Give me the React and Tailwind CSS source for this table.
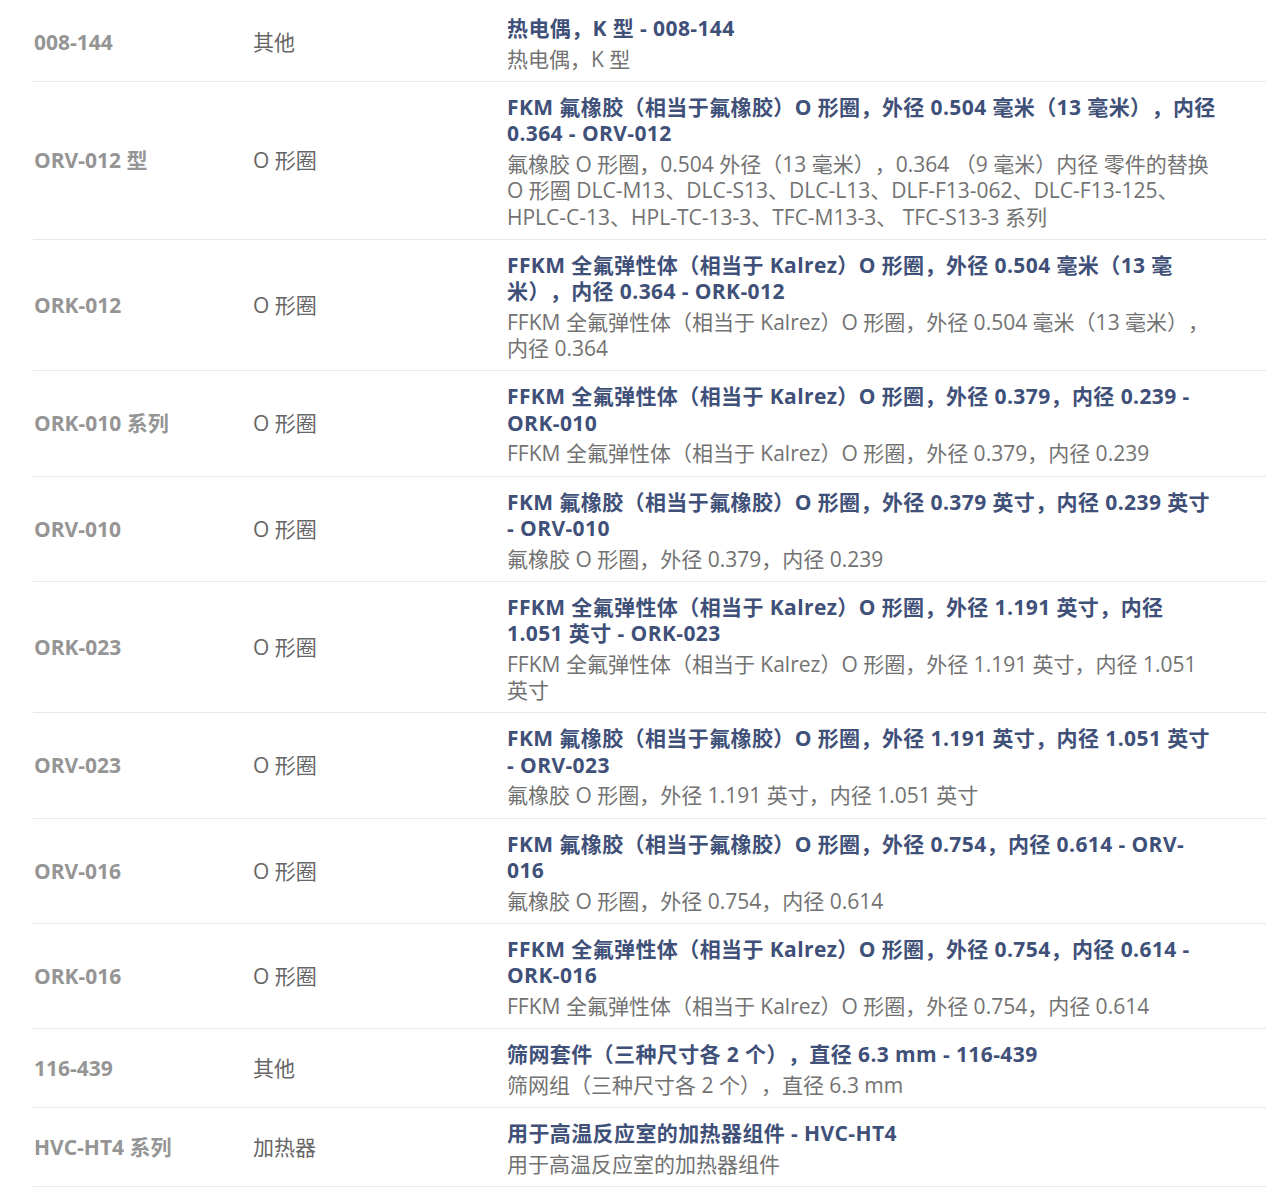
import React from "react";

const rows = [
  { code: "008-144", cat: "其他", title: "热电偶，K 型 - 008-144", desc: "热电偶，K 型" },
  {
    code: "ORV-012 型",
    cat: "O 形圈",
    title: "FKM 氟橡胶（相当于氟橡胶）O 形圈，外径 0.504 毫米（13 毫米），内径 0.364 - ORV-012",
    desc: "氟橡胶 O 形圈，0.504 外径（13 毫米），0.364 （9 毫米）内径 零件的替换 O 形圈 DLC-M13、DLC-S13、DLC-L13、DLF-F13-062、DLC-F13-125、HPLC-C-13、HPL-TC-13-3、TFC-M13-3、 TFC-S13-3 系列",
  },
  {
    code: "ORK-012",
    cat: "O 形圈",
    title: "FFKM 全氟弹性体（相当于 Kalrez）O 形圈，外径 0.504 毫米（13 毫米），内径 0.364 - ORK-012",
    desc: "FFKM 全氟弹性体（相当于 Kalrez）O 形圈，外径 0.504 毫米（13 毫米），内径 0.364",
  },
  {
    code: "ORK-010 系列",
    cat: "O 形圈",
    title: "FFKM 全氟弹性体（相当于 Kalrez）O 形圈，外径 0.379，内径 0.239 - ORK-010",
    desc: "FFKM 全氟弹性体（相当于 Kalrez）O 形圈，外径 0.379，内径 0.239",
  },
  {
    code: "ORV-010",
    cat: "O 形圈",
    title: "FKM 氟橡胶（相当于氟橡胶）O 形圈，外径 0.379 英寸，内径 0.239 英寸 - ORV-010",
    desc: "氟橡胶 O 形圈，外径 0.379，内径 0.239",
  },
  {
    code: "ORK-023",
    cat: "O 形圈",
    title: "FFKM 全氟弹性体（相当于 Kalrez）O 形圈，外径 1.191 英寸，内径 1.051 英寸 - ORK-023",
    desc: "FFKM 全氟弹性体（相当于 Kalrez）O 形圈，外径 1.191 英寸，内径 1.051 英寸",
  },
  {
    code: "ORV-023",
    cat: "O 形圈",
    title: "FKM 氟橡胶（相当于氟橡胶）O 形圈，外径 1.191 英寸，内径 1.051 英寸 - ORV-023",
    desc: "氟橡胶 O 形圈，外径 1.191 英寸，内径 1.051 英寸",
  },
  {
    code: "ORV-016",
    cat: "O 形圈",
    title: "FKM 氟橡胶（相当于氟橡胶）O 形圈，外径 0.754，内径 0.614 - ORV-016",
    desc: "氟橡胶 O 形圈，外径 0.754，内径 0.614",
  },
  {
    code: "ORK-016",
    cat: "O 形圈",
    title: "FFKM 全氟弹性体（相当于 Kalrez）O 形圈，外径 0.754，内径 0.614 - ORK-016",
    desc: "FFKM 全氟弹性体（相当于 Kalrez）O 形圈，外径 0.754，内径 0.614",
  },
  {
    code: "116-439",
    cat: "其他",
    title: "筛网套件（三种尺寸各 2 个），直径 6.3 mm - 116-439",
    desc: "筛网组（三种尺寸各 2 个），直径 6.3 mm",
  },
  {
    code: "HVC-HT4 系列",
    cat: "加热器",
    title: "用于高温反应室的加热器组件 - HVC-HT4",
    desc: "用于高温反应室的加热器组件",
  },
];

export default function App() {
  return (
    <div
      className="bg-white min-h-[1191px] w-[1266px] pl-[33px] pt-[3px] [text-spacing-trim:space-all]"
      style={{ fontFamily: '"Open Sans", "Noto Sans CJK SC", sans-serif' }}
    >
      {rows.map((r) => (
        <div
          key={r.code}
          className="grid grid-cols-[220px_254px_1fr] border-b border-[#e8e8e8] text-[21px] leading-[26.25px]"
        >
          <div className="flex items-center pl-px font-bold text-[#959595]">{r.code}</div>
          <div className="flex items-center text-[#666666]">{r.cat}</div>
          <div className="flex flex-col gap-[4.5px] pt-[12px] pb-[9px] pr-[49px]">
            <div className="font-bold tracking-[0.4px] text-[#3f5079]">{r.title}</div>
            <div className="text-[#727272]">{r.desc}</div>
          </div>
        </div>
      ))}
    </div>
  );
}
